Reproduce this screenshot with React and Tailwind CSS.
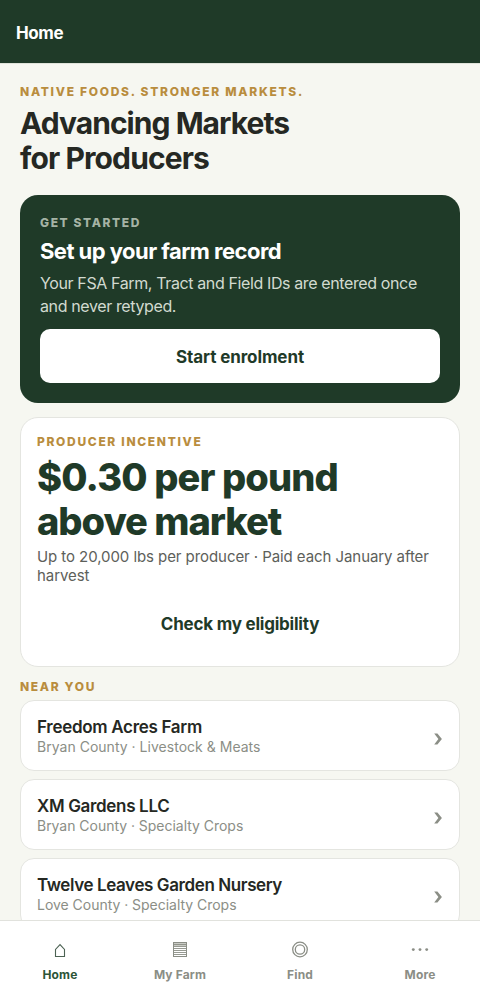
import React from "react";

const farms = [
  { name: "Freedom Acres Farm", detail: "Bryan County · Livestock & Meats", nameTrack: "tracking-[-0.3px]", detailTrack: "tracking-[0.02px]" },
  { name: "XM Gardens LLC", detail: "Bryan County · Specialty Crops", nameTrack: "tracking-[-0.33px]", detailTrack: "tracking-[-0.03px]" },
  { name: "Twelve Leaves Garden Nursery", detail: "Love County · Specialty Crops", nameTrack: "tracking-[-0.4px]", detailTrack: "tracking-[-0.03px]" },
];

function Chevron() {
  return (
    <svg className="mt-[6px] mr-[1px] h-3 w-2 shrink-0" viewBox="0 0 8 12" fill="#8b8e86">
      <path d="M0.2 0.5H3.4L7.9 6 3.4 11.5H0.2L4.4 6Z" />
    </svg>
  );
}

function HomeIcon() {
  return (
    <svg className="size-6" viewBox="0 0 24 24" fill="none" stroke="#4c6253" strokeWidth="1.1">
      <path d="M12 6.6 7.5 11.5V18.5h9v-7L12 6.6Z" />
    </svg>
  );
}

function FarmIcon() {
  return (
    <svg className="size-6" viewBox="0 0 24 24" fill="none" stroke="#8b8e86" strokeWidth="1">
      <path d="M5 4h14v4H5z" fill="#c9cbc5" stroke="none" />
      <rect x="5.5" y="4.5" width="13" height="14" />
      <path d="M5.5 6.5h13M5.5 8.5h13M5.5 10.5h13M5.5 12.5h13M5.5 14.5h13M5.5 16.5h13" strokeWidth="0.9" />
    </svg>
  );
}

function FindIcon() {
  return (
    <svg className="size-6" viewBox="0 0 24 24" fill="none" stroke="#8b8e86" strokeWidth="1.3">
      <circle cx="12" cy="11.5" r="7.3" />
      <circle cx="12" cy="11.5" r="4.7" />
    </svg>
  );
}

function MoreIcon() {
  return (
    <svg className="size-6" viewBox="0 0 24 24" fill="#8b8e86">
      <circle cx="5.3" cy="11.6" r="1.45" />
      <circle cx="12" cy="11.6" r="1.45" />
      <circle cx="18.7" cy="11.6" r="1.45" />
    </svg>
  );
}

const tabs = [
  { label: "Home", Icon: HomeIcon, color: "text-[#2c5538]" },
  { label: "My Farm", Icon: FarmIcon, color: "text-[#8b8e86]" },
  { label: "Find", Icon: FindIcon, color: "text-[#8b8e86]" },
  { label: "More", Icon: MoreIcon, color: "text-[#8b8e86]" },
];

export default function App() {
  return (
    <div className="flex h-[1000px] w-full flex-col overflow-hidden bg-[#f6f7f1] font-['Inter','Liberation_Sans',sans-serif] text-[#252823]">
      <header className="flex h-[64px] shrink-0 items-center border-b border-[#dfe3da] bg-[#1f3a28] px-4 pt-[3px]">
        <div className="text-[17px] leading-5 font-bold tracking-[-0.4px] text-white">Home</div>
      </header>

      <main className="flex min-h-0 flex-1 flex-col overflow-hidden px-5 pt-[20px]">
        <div className="text-[12px] leading-[15px] font-extrabold tracking-[1.71px] text-[#b98d3e]">NATIVE FOODS. STRONGER MARKETS.</div>
        <h1 className="mt-[7px] text-[30px] leading-[35px] font-bold">
          <span className="tracking-[-0.96px]">Advancing Markets</span>
          <br />
          <span className="tracking-[-0.89px]">for Producers</span>
        </h1>

        <section className="mt-[19px] h-[208px] shrink-0 rounded-[18px] bg-[#1f3a28] p-5">
          <div className="text-[12px] leading-4 font-extrabold tracking-[1.6px] text-[#a5b3a5]">GET STARTED</div>
          <h2 className="mt-[7px] text-[22px] leading-[27px] font-bold tracking-[-0.54px] text-white">Set up your farm record</h2>
          <p className="mt-[7px] text-[16px] leading-[23px] tracking-[-0.38px] text-[#d2dad0]">
            Your FSA Farm, Tract and Field IDs are entered once
            <br />
            and never retyped.
          </p>
          <button className="mt-[11px] flex h-[54px] w-full items-center justify-center rounded-[10px] bg-white pt-[3px] text-[17px] font-bold tracking-[-0.1px] text-[#1f3a28]">Start enrolment</button>
        </section>

        <section className="mt-[14px] h-[250px] shrink-0 rounded-[18px] border border-[#e4e5e0] bg-white px-4 pt-4">
          <div className="text-[12px] leading-[15px] font-extrabold tracking-[1.67px] text-[#b98d3e]">PRODUCER INCENTIVE</div>
          <div className="mt-[6px] text-[38px] leading-[44px] font-extrabold text-[#1f3a28]">
            <span className="tracking-[-0.87px]">$0.30 per pound</span>
            <br />
            <span className="tracking-[-1.02px]">above market</span>
          </div>
          <p className="mt-[4px] text-[15px] leading-[19px] tracking-[-0.07px] text-[#5d605a]">
            Up to 20,000 lbs per producer · Paid each January after
            <br />
            harvest
          </p>
          <button className="mt-[13px] flex h-[54px] w-full items-center justify-center text-[17px] font-bold tracking-[-0.22px] text-[#1f3a28]">Check my eligibility</button>
        </section>

        <div className="mt-3 text-[12px] leading-[15px] font-extrabold tracking-[1.66px] text-[#b98d3e]">NEAR YOU</div>
        <div className="mt-[6px] flex flex-col gap-2">
          {farms.map((farm) => (
            <div key={farm.name} className="flex h-[71px] shrink-0 items-center justify-between rounded-[14px] border border-[#e4e5e0] bg-white px-4">
              <div className="pt-[2px]">
                <div className={"text-[17px] leading-[21px] font-semibold " + farm.nameTrack}>{farm.name}</div>
                <div className={"text-[14px] leading-[18px] text-[#8b8e86] " + farm.detailTrack}>{farm.detail}</div>
              </div>
              <Chevron />
            </div>
          ))}
        </div>
      </main>

      <nav className="grid h-20 shrink-0 grid-cols-4 border-t border-[#e1e2dd] bg-white pt-[17px]">
        {tabs.map(({ label, Icon, color }) => (
          <div key={label} className={"flex flex-col items-center " + color}>
            <Icon />
            <div className="mt-[5px] text-[12px] leading-4 font-bold tracking-[0.15px]">{label}</div>
          </div>
        ))}
      </nav>
    </div>
  );
}
